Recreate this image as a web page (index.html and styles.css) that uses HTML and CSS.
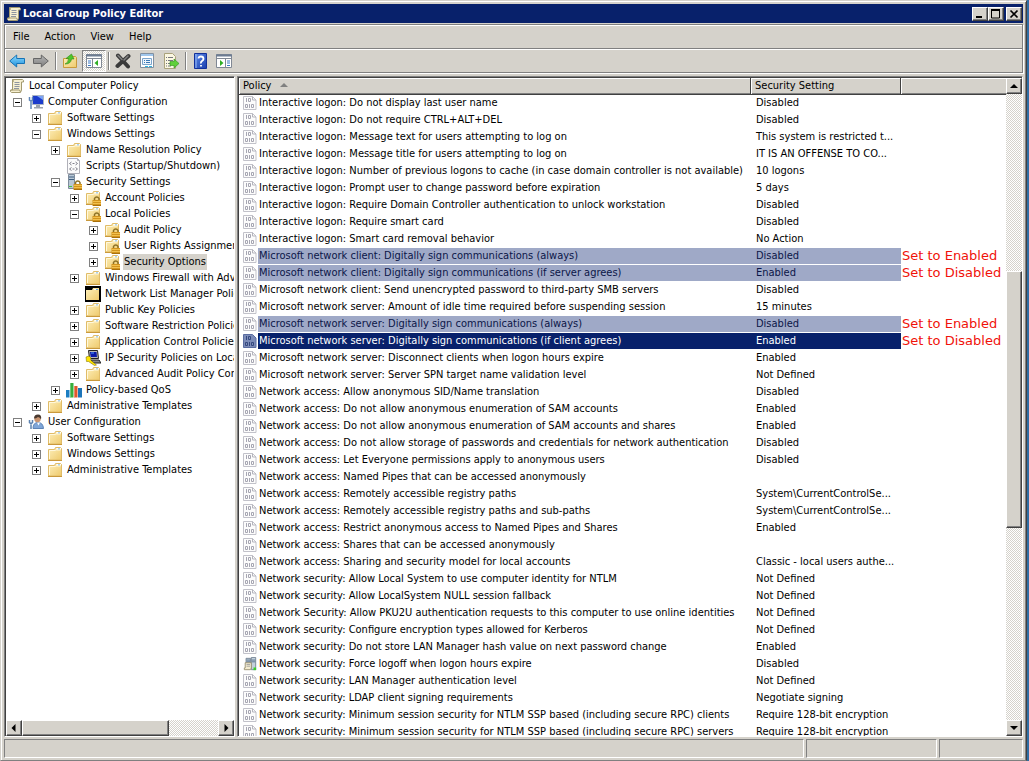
FILE: index.html
```html
<!DOCTYPE html>
<html lang="en">
<head>
  <meta charset="UTF-8">
  <meta name="viewport" content="width=device-width, initial-scale=1.0">
  <title>Local Group Policy Editor</title>
  <link rel="stylesheet" href="styles.css">
</head>
<body>

  <!-- Icon sprite -->
  <svg class="sprite" aria-hidden="true">
    <defs>
      <linearGradient id="gFolder" x1="0" y1="0" x2="1" y2="1">
        <stop offset="0" stop-color="#fdf0bc"/><stop offset="1" stop-color="#efca6c"/>
      </linearGradient>
      <linearGradient id="gBlue" x1="0" y1="0" x2="0" y2="1">
        <stop offset="0" stop-color="#8fdcff"/><stop offset="1" stop-color="#1d8fdc"/>
      </linearGradient>
      <linearGradient id="gGray" x1="0" y1="0" x2="0" y2="1">
        <stop offset="0" stop-color="#b8b8b8"/><stop offset="1" stop-color="#7c7c7c"/>
      </linearGradient>
      <linearGradient id="gHelp" x1="0" y1="0" x2="1" y2="1">
        <stop offset="0" stop-color="#5c8ae8"/><stop offset="1" stop-color="#1b3fae"/>
      </linearGradient>
    </defs>

    <symbol id="scroll" viewBox="0 0 16 16">
      <path d="M3.5 1.5h10q1.5.5 1 2.5h-2v8l-1 2.500h-9q-1.500-.500-1-2.500h2z" fill="#f6efd0" stroke="#a39a70"/>
      <path d="M3.500 1.500q1.500 1 .500 2.500M2 12h8.500l1 2" fill="none" stroke="#a39a70"/>
      <path d="M5.500 4.500h5M5.500 6.500h5M5.500 8.500h5M5 10.500h5" stroke="#8e95a0"/>
    </symbol>
    <symbol id="folder" viewBox="0 0 16 16">
      <path d="M1.500 3.500h6l1-2h5l1 1v11.500h-13z" fill="url(#gFolder)" stroke="#e0bc68"/>
      <path d="M9 3.500h5V2H9.500z" fill="#fff"/>
      <path d="M11 3h2" stroke="#5aa6e6"/>
      <path d="M2.500 13V4.500h6l1-.500h4" fill="none" stroke="#fff8dc"/>
      <path d="M1 14.500h14" stroke="#c9993c"/>
    </symbol>
    <symbol id="lock" viewBox="0 0 16 16">
      <path d="M9.500 10V8.500a2.500 2.500 0 0 1 4.500 0V10" fill="none" stroke="#8c7126" stroke-width="1.500"/>
      <path d="M7.500 10h8.500v6H7.500z" fill="#d2941e"/>
      <path d="M8 11.500h8M8 13.500h8" stroke="#f2c04c"/>
      <path d="M8 15.500h8" stroke="#a8700c"/>
    </symbol>
    <symbol id="folderLock" viewBox="0 0 16 16">
      <use href="#folder" width="16" height="16"/><use href="#lock" width="16" height="16"/>
    </symbol>
    <symbol id="folderDark" viewBox="0 0 16 16">
      <path d="M0 0h16v16H0z" fill="#000"/>
      <path d="M1 4h6l1-2h6v12H1z" fill="url(#gFolder)"/>
      <path d="M9 3.500h4" stroke="#fff"/><path d="M11 3.500h2" stroke="#5aa6e6"/>
    </symbol>
    <symbol id="computer" viewBox="0 0 16 16">
      <path d="M4.500 1.500h11v9h-11z" fill="#1c3ccc" stroke="#aab4c4"/>
      <path d="M9 2h6v4z" fill="#7aa2f4"/>
      <path d="M8 11h4v2h3v1.500H6V13h2z" fill="#9aa2ae"/>
      <path d="M1.500 3v3l1.500 1 1.500-1V3M3 7v8" fill="none" stroke="#5f86b8" stroke-width="1.500"/>
    </symbol>
    <symbol id="user" viewBox="0 0 16 16">
      <path d="M5 14.500q0-6 5-6t5.500 6z" fill="#7fa6d8" stroke="#5e84b6"/>
      <path d="M9 8.500l1.500 3 1.500-3z" fill="#fff"/>
      <circle cx="9.500" cy="5" r="3.200" fill="#c99470"/>
      <path d="M6 4.500q0-4 4-4t3 5q-1-2.500-3-2.500-2 1.500-4 1.500z" fill="#4a3a30"/>
      <path d="M1.500 6v2.500L3 9.500l1.500-1V6M3 9.500V15" fill="none" stroke="#5d82b0" stroke-width="1.500"/>
    </symbol>
    <symbol id="script" viewBox="0 0 16 16">
      <path d="M1.500.500h10l2 2v13h-12z" fill="#fbfbfb" stroke="#b0b0b8"/>
      <path d="M11.500.500v2h2" fill="none" stroke="#b0b0b8"/>
      <path d="M5.500 4L3.500 5.500l2 1.500M9.500 4l2 1.500-2 1.500M6.500 5.500h2M5.500 9.500l-2 1.500 2 1.500M9.500 9.500l2 1.500-2 1.500M6.500 11h2" fill="none" stroke="#80808c"/>
    </symbol>
    <symbol id="server" viewBox="0 0 16 16">
      <path d="M2.500.500h6v14h-6z" fill="#b9c8d6" stroke="#7e8c9c"/>
      <path d="M3 3h5M3 5.500h5" stroke="#3f5f80"/><path d="M3 12.500h3" stroke="#49c440"/>
      <use href="#lock" width="16" height="16"/>
    </symbol>
    <symbol id="ipsec" viewBox="0 0 16 16">
      <path d="M3.500.500h9l1 8h-9z" fill="#b8b8b8" stroke="#222"/>
      <path d="M5 2h6.500l.5 5H5.700z" fill="#0a1aa8"/><path d="M6 3h3" stroke="#4d9cff"/>
      <path d="M6 10h8l2 3H8z" fill="#888" stroke="#222"/>
      <path d="M1 7l3-1 2 2-.500 2 6 5-2 .500-6-4-2 0z" fill="#ffe400" stroke="#6e6200" stroke-width=".5"/>
    </symbol>
    <symbol id="bars" viewBox="0 0 16 16">
      <path d="M0 8h3.500v7.500H0z" fill="#1c7ec2"/><path d="M4 1h3.500v14.500H4z" fill="#37ae3c"/>
      <path d="M8 4h3.500v11.500H8z" fill="#e0582c"/><path d="M12 6h4v9.500h-4z" fill="#1c74b8"/>
      <path d="M4.500 1v14M8.500 4v11" stroke="#fff" stroke-opacity=".3"/>
    </symbol>
    <symbol id="binary" viewBox="0 0 14 14">
      <path d="M.500.500h9l3.500 3.500v9.500H.500z" fill="#fcfcfc" stroke="#c2c2ca"/>
      <path d="M9.500.500V4H13" fill="none" stroke="#b4b4bc"/>
      <path d="M3.500 2v4M5.500 2.500h2v3h-2zM2.500 8.500h2v3h-2zM6.500 8v4M8.500 8.500h2v3h-2z" fill="none" stroke="#a6a6b2"/>
    </symbol>
    <symbol id="binarySel" viewBox="0 0 14 14">
      <path d="M.500.500h9l3.500 3.500v9.500H.500z" fill="#7c8cb8" stroke="#5a6ca0"/>
      <path d="M3.500 2v4M5.500 2.500h2v3h-2zM2.500 8.500h2v3h-2zM6.500 8v4M8.500 8.500h2v3h-2z" fill="none" stroke="#35487e"/>
    </symbol>
    <symbol id="servers" viewBox="0 0 16 16">
      <path d="M3.500 1.500h5v12h-5zM9.500.500h5v14h-5z" fill="#c3d0dc" stroke="#6f7f90"/>
      <path d="M4 3.500h4M4 5.500h4M10 3.500h4M10 5.500h4" stroke="#4f6b88"/>
      <path d="M2.500 6.500h7v6l-1 2h-7v-2h1z" fill="#f4ecd0" stroke="#988f70"/>
      <path d="M4 8.500h4M4 10.500h4" stroke="#9c9c9c"/><path d="M12 12h3v3h-3z" fill="#37d028"/>
    </symbol>

    <symbol id="back" viewBox="0 0 16 16">
      <path d="M.700 8l7-6v3.500h7.800v5H7.700V14z" fill="url(#gBlue)" stroke="#1673b6"/>
    </symbol>
    <symbol id="forward" viewBox="0 0 16 16">
      <path d="M15.300 8l-7-6v3.500H.500v5h7.800V14z" fill="url(#gGray)" stroke="#666"/>
    </symbol>
    <symbol id="up" viewBox="0 0 16 16">
      <path d="M1.500 5.500h5l1-2h6l1 1v10h-13z" fill="url(#gFolder)" stroke="#c99a3c"/>
      <path d="M3 11q3.500-1 3.500-5.500H4L9.500 1l2.500 5H9.500Q9 11 3 11z" fill="#4fc62c" stroke="#2c8a17" stroke-width=".6"/>
    </symbol>
    <symbol id="treePane" viewBox="0 0 16 16">
      <path d="M.500 1.500h15v13H.500z" fill="#fff" stroke="#808894"/><path d="M0 2.500h16" stroke="#6d7c92" stroke-width="2"/>
      <path d="M0 5.500h16M6.500 6v9" stroke="#808894"/><path d="M2 8h3M2 10h3M2 12.500h3" stroke="#3b78c4"/>
      <path d="M12 7v6l-3.500-3z" fill="#2fae24"/>
    </symbol>
    <symbol id="delete" viewBox="0 0 16 16">
      <path d="M3 2.500l10 11M13.500 3L2.500 13" stroke="#3a3a3a" stroke-width="4" stroke-linecap="round"/>
      <path d="M3 2.500l4 4M13 3L9 7" stroke="#808080" stroke-width="1.500" stroke-linecap="round"/>
    </symbol>
    <symbol id="props" viewBox="0 0 16 16">
      <path d="M1.500.500h13v14h-13z" fill="#fff" stroke="#8290a0"/><path d="M2 2h12" stroke="#9fc6ec" stroke-width="2"/>
      <path d="M3.500 5.500h9v6h-9z" fill="#eef5fc" stroke="#7aa4cc"/>
      <path d="M5 7.500h1M7 7.500h4M5 9.500h1M7 9.500h4" stroke="#3978b8"/><path d="M6 13.500h3M10 13.500h3" stroke="#30b4e0"/>
    </symbol>
    <symbol id="export" viewBox="0 0 16 16">
      <path d="M1.500.500h8l3 3v12h-11z" fill="#fbf7e2" stroke="#aaa27c"/>
      <path d="M3 4.500h1M5 4.500h5M3 7.500h1M5 7.500h5M3 10.500h1M5 10.500h3M3 13h1M5 13h3" stroke="#77777f"/>
      <path d="M7 8.500h4V6l5 4.500-5 4.500v-2.500H7z" fill="#5fd03a" stroke="#2e9018" stroke-width=".6"/>
    </symbol>
    <symbol id="help" viewBox="0 0 16 16">
      <path d="M2.500.500h12v15h-12z" fill="url(#gHelp)" stroke="#12309a"/>
      <path d="M4 1v14" stroke="#9bbcf6"/>
      <path d="M6.500 5.500Q6.500 3.500 9 3.500T11.500 6Q11.500 7 10 8T9 10.500M9 12v1.500" fill="none" stroke="#fff" stroke-width="1.800"/>
    </symbol>
    <symbol id="actionPane" viewBox="0 0 16 16">
      <path d="M.500 1.500h15v13H.500z" fill="#fff" stroke="#808894"/><path d="M0 2.500h16" stroke="#6d7c92" stroke-width="2"/>
      <path d="M0 5.500h16M9.500 6v9" stroke="#808894"/><path d="M11 8h3M11 10h3M11 12.500h3" stroke="#3b78c4"/>
      <path d="M4 7v6l3.500-3z" fill="#2fae24"/>
    </symbol>
  </svg>

  <div class="window">
    <!-- Title bar -->
    <header class="titlebar">
      <svg class="icon"><use href="#scroll"/></svg>
      <h1 class="title">Local Group Policy Editor</h1>
      <button class="caption-btn" aria-label="Minimize"><svg viewBox="0 0 12 10"><path d="M2 8h6" stroke="#000" stroke-width="2"/></svg></button>
      <button class="caption-btn" aria-label="Maximize"><svg viewBox="0 0 12 10"><path d="M1.500 1v8h8V1" fill="none" stroke="#000"/><path d="M1 1h9" stroke="#000" stroke-width="2"/></svg></button>
      <button class="caption-btn close" aria-label="Close"><svg viewBox="0 0 12 10"><path d="M2.500 1.500l7 7M9.500 1.500l-7 7" stroke="#000" stroke-width="1.700"/></svg></button>
    </header>

    <!-- Menu and toolbar -->
    <div class="bars">
      <nav class="menubar">
        <button>File</button>
        <button>Action</button>
        <button>View</button>
        <button>Help</button>
      </nav>
      <div class="toolbar">
        <button class="tool" aria-label="Back"><svg class="icon"><use href="#back"/></svg></button>
        <button class="tool" aria-label="Forward"><svg class="icon"><use href="#forward"/></svg></button>
        <span class="sep"></span>
        <button class="tool" aria-label="Up one level"><svg class="icon"><use href="#up"/></svg></button>
        <button class="tool pressed" aria-label="Show or hide console tree"><svg class="icon"><use href="#treePane"/></svg></button>
        <span class="sep"></span>
        <button class="tool" aria-label="Delete"><svg class="icon"><use href="#delete"/></svg></button>
        <button class="tool" aria-label="Properties"><svg class="icon"><use href="#props"/></svg></button>
        <button class="tool" aria-label="Export list"><svg class="icon"><use href="#export"/></svg></button>
        <span class="sep"></span>
        <button class="tool" aria-label="Help topics"><svg class="icon"><use href="#help"/></svg></button>
        <button class="tool" aria-label="Show or hide action pane"><svg class="icon"><use href="#actionPane"/></svg></button>
      </div>
    </div>

    <main class="content">
      <!-- Console tree -->
      <section class="panel tree-panel">
        <div class="tree">
          <div class="node root"><svg class="icon"><use href="#scroll"/></svg><span>Local Computer Policy</span></div>
          <ul>
            <li><div class="node"><button class="exp open" aria-label="Collapse"></button><svg class="icon"><use href="#computer"/></svg><span>Computer Configuration</span></div>
              <ul>
                <li><div class="node"><button class="exp" aria-label="Expand"></button><svg class="icon"><use href="#folder"/></svg><span>Software Settings</span></div></li>
                <li><div class="node"><button class="exp open" aria-label="Collapse"></button><svg class="icon"><use href="#folder"/></svg><span>Windows Settings</span></div>
                  <ul>
                    <li><div class="node"><button class="exp" aria-label="Expand"></button><svg class="icon"><use href="#folder"/></svg><span>Name Resolution Policy</span></div></li>
                    <li><div class="node leaf"><svg class="icon"><use href="#script"/></svg><span>Scripts (Startup/Shutdown)</span></div></li>
                    <li><div class="node"><button class="exp open" aria-label="Collapse"></button><svg class="icon"><use href="#server"/></svg><span>Security Settings</span></div>
                      <ul>
                        <li><div class="node"><button class="exp" aria-label="Expand"></button><svg class="icon"><use href="#folderLock"/></svg><span>Account Policies</span></div></li>
                        <li><div class="node"><button class="exp open" aria-label="Collapse"></button><svg class="icon"><use href="#folderLock"/></svg><span>Local Policies</span></div>
                          <ul>
                            <li><div class="node"><button class="exp" aria-label="Expand"></button><svg class="icon"><use href="#folderLock"/></svg><span>Audit Policy</span></div></li>
                            <li><div class="node"><button class="exp" aria-label="Expand"></button><svg class="icon"><use href="#folderLock"/></svg><span>User Rights Assignment</span></div></li>
                            <li><div class="node current"><button class="exp" aria-label="Expand"></button><svg class="icon"><use href="#folderLock"/></svg><span>Security Options</span></div></li>
                          </ul>
                        </li>
                        <li><div class="node"><button class="exp" aria-label="Expand"></button><svg class="icon"><use href="#folder"/></svg><span>Windows Firewall with Advanced Security</span></div></li>
                        <li><div class="node leaf"><svg class="icon"><use href="#folderDark"/></svg><span>Network List Manager Policies</span></div></li>
                        <li><div class="node"><button class="exp" aria-label="Expand"></button><svg class="icon"><use href="#folder"/></svg><span>Public Key Policies</span></div></li>
                        <li><div class="node"><button class="exp" aria-label="Expand"></button><svg class="icon"><use href="#folder"/></svg><span>Software Restriction Policies</span></div></li>
                        <li><div class="node"><button class="exp" aria-label="Expand"></button><svg class="icon"><use href="#folder"/></svg><span>Application Control Policies</span></div></li>
                        <li><div class="node"><button class="exp" aria-label="Expand"></button><svg class="icon"><use href="#ipsec"/></svg><span>IP Security Policies on Local Computer</span></div></li>
                        <li><div class="node"><button class="exp" aria-label="Expand"></button><svg class="icon"><use href="#folder"/></svg><span>Advanced Audit Policy Configuration</span></div></li>
                      </ul>
                    </li>
                    <li><div class="node"><button class="exp" aria-label="Expand"></button><svg class="icon"><use href="#bars"/></svg><span>Policy-based QoS</span></div></li>
                  </ul>
                </li>
                <li><div class="node"><button class="exp" aria-label="Expand"></button><svg class="icon"><use href="#folder"/></svg><span>Administrative Templates</span></div></li>
              </ul>
            </li>
            <li><div class="node"><button class="exp open" aria-label="Collapse"></button><svg class="icon"><use href="#user"/></svg><span>User Configuration</span></div>
              <ul>
                <li><div class="node"><button class="exp" aria-label="Expand"></button><svg class="icon"><use href="#folder"/></svg><span>Software Settings</span></div></li>
                <li><div class="node"><button class="exp" aria-label="Expand"></button><svg class="icon"><use href="#folder"/></svg><span>Windows Settings</span></div></li>
                <li><div class="node"><button class="exp" aria-label="Expand"></button><svg class="icon"><use href="#folder"/></svg><span>Administrative Templates</span></div></li>
              </ul>
            </li>
          </ul>
        </div>
        <div class="scrollbar horizontal">
          <button class="arrow" aria-label="Scroll left"><svg viewBox="0 0 8 8"><path d="M5.500 0v8l-4-4z"/></svg></button>
          <div class="thumb"></div>
          <div class="track"></div>
          <button class="arrow" aria-label="Scroll right"><svg viewBox="0 0 8 8"><path d="M2.500 0v8l4-4z"/></svg></button>
        </div>
      </section>

      <!-- Policy list -->
      <section class="panel list-panel">
        <div class="list">
          <table>
            <colgroup><col class="col-policy"><col class="col-setting"><col></colgroup>
            <thead>
              <tr><th>Policy <svg class="sort" viewBox="0 0 8 4"><path d="M0 4l4-4 4 4z"/></svg></th><th>Security Setting</th><th></th></tr>
            </thead>
            <tbody>
              <tr><td><div class="policy"><svg><use href="#binary"/></svg><span>Interactive logon: Do not display last user name</span></div></td><td>Disabled</td><td></td></tr>
              <tr><td><div class="policy"><svg><use href="#binary"/></svg><span>Interactive logon: Do not require CTRL+ALT+DEL</span></div></td><td>Disabled</td><td></td></tr>
              <tr><td><div class="policy"><svg><use href="#binary"/></svg><span>Interactive logon: Message text for users attempting to log on</span></div></td><td>This system is restricted t...</td><td></td></tr>
              <tr><td><div class="policy"><svg><use href="#binary"/></svg><span>Interactive logon: Message title for users attempting to log on</span></div></td><td>IT IS AN OFFENSE TO CO...</td><td></td></tr>
              <tr><td><div class="policy"><svg><use href="#binary"/></svg><span>Interactive logon: Number of previous logons to cache (in case domain controller is not available)</span></div></td><td>10 logons</td><td></td></tr>
              <tr><td><div class="policy"><svg><use href="#binary"/></svg><span>Interactive logon: Prompt user to change password before expiration</span></div></td><td>5 days</td><td></td></tr>
              <tr><td><div class="policy"><svg><use href="#binary"/></svg><span>Interactive logon: Require Domain Controller authentication to unlock workstation</span></div></td><td>Disabled</td><td></td></tr>
              <tr><td><div class="policy"><svg><use href="#binary"/></svg><span>Interactive logon: Require smart card</span></div></td><td>Disabled</td><td></td></tr>
              <tr><td><div class="policy"><svg><use href="#binary"/></svg><span>Interactive logon: Smart card removal behavior</span></div></td><td>No Action</td><td></td></tr>
              <tr class="marked"><td><div class="policy"><svg><use href="#binary"/></svg><span>Microsoft network client: Digitally sign communications (always)</span></div></td><td>Disabled</td><td class="note">Set to Enabled</td></tr>
              <tr class="marked"><td><div class="policy"><svg><use href="#binary"/></svg><span>Microsoft network client: Digitally sign communications (if server agrees)</span></div></td><td>Enabled</td><td class="note">Set to Disabled</td></tr>
              <tr><td><div class="policy"><svg><use href="#binary"/></svg><span>Microsoft network client: Send unencrypted password to third-party SMB servers</span></div></td><td>Disabled</td><td></td></tr>
              <tr><td><div class="policy"><svg><use href="#binary"/></svg><span>Microsoft network server: Amount of idle time required before suspending session</span></div></td><td>15 minutes</td><td></td></tr>
              <tr class="marked"><td><div class="policy"><svg><use href="#binary"/></svg><span>Microsoft network server: Digitally sign communications (always)</span></div></td><td>Disabled</td><td class="note">Set to Enabled</td></tr>
              <tr class="selected"><td><div class="policy"><svg><use href="#binarySel"/></svg><span>Microsoft network server: Digitally sign communications (if client agrees)</span></div></td><td>Enabled</td><td class="note">Set to Disabled</td></tr>
              <tr><td><div class="policy"><svg><use href="#binary"/></svg><span>Microsoft network server: Disconnect clients when logon hours expire</span></div></td><td>Enabled</td><td></td></tr>
              <tr><td><div class="policy"><svg><use href="#binary"/></svg><span>Microsoft network server: Server SPN target name validation level</span></div></td><td>Not Defined</td><td></td></tr>
              <tr><td><div class="policy"><svg><use href="#binary"/></svg><span>Network access: Allow anonymous SID/Name translation</span></div></td><td>Disabled</td><td></td></tr>
              <tr><td><div class="policy"><svg><use href="#binary"/></svg><span>Network access: Do not allow anonymous enumeration of SAM accounts</span></div></td><td>Enabled</td><td></td></tr>
              <tr><td><div class="policy"><svg><use href="#binary"/></svg><span>Network access: Do not allow anonymous enumeration of SAM accounts and shares</span></div></td><td>Enabled</td><td></td></tr>
              <tr><td><div class="policy"><svg><use href="#binary"/></svg><span>Network access: Do not allow storage of passwords and credentials for network authentication</span></div></td><td>Disabled</td><td></td></tr>
              <tr><td><div class="policy"><svg><use href="#binary"/></svg><span>Network access: Let Everyone permissions apply to anonymous users</span></div></td><td>Disabled</td><td></td></tr>
              <tr><td><div class="policy"><svg><use href="#binary"/></svg><span>Network access: Named Pipes that can be accessed anonymously</span></div></td><td></td><td></td></tr>
              <tr><td><div class="policy"><svg><use href="#binary"/></svg><span>Network access: Remotely accessible registry paths</span></div></td><td>System\CurrentControlSe...</td><td></td></tr>
              <tr><td><div class="policy"><svg><use href="#binary"/></svg><span>Network access: Remotely accessible registry paths and sub-paths</span></div></td><td>System\CurrentControlSe...</td><td></td></tr>
              <tr><td><div class="policy"><svg><use href="#binary"/></svg><span>Network access: Restrict anonymous access to Named Pipes and Shares</span></div></td><td>Enabled</td><td></td></tr>
              <tr><td><div class="policy"><svg><use href="#binary"/></svg><span>Network access: Shares that can be accessed anonymously</span></div></td><td></td><td></td></tr>
              <tr><td><div class="policy"><svg><use href="#binary"/></svg><span>Network access: Sharing and security model for local accounts</span></div></td><td>Classic - local users authe...</td><td></td></tr>
              <tr><td><div class="policy"><svg><use href="#binary"/></svg><span>Network security: Allow Local System to use computer identity for NTLM</span></div></td><td>Not Defined</td><td></td></tr>
              <tr><td><div class="policy"><svg><use href="#binary"/></svg><span>Network security: Allow LocalSystem NULL session fallback</span></div></td><td>Not Defined</td><td></td></tr>
              <tr><td><div class="policy"><svg><use href="#binary"/></svg><span>Network Security: Allow PKU2U authentication requests to this computer to use online identities</span></div></td><td>Not Defined</td><td></td></tr>
              <tr><td><div class="policy"><svg><use href="#binary"/></svg><span>Network security: Configure encryption types allowed for Kerberos</span></div></td><td>Not Defined</td><td></td></tr>
              <tr><td><div class="policy"><svg><use href="#binary"/></svg><span>Network security: Do not store LAN Manager hash value on next password change</span></div></td><td>Enabled</td><td></td></tr>
              <tr><td><div class="policy"><svg><use href="#servers"/></svg><span>Network security: Force logoff when logon hours expire</span></div></td><td>Disabled</td><td></td></tr>
              <tr><td><div class="policy"><svg><use href="#binary"/></svg><span>Network security: LAN Manager authentication level</span></div></td><td>Not Defined</td><td></td></tr>
              <tr><td><div class="policy"><svg><use href="#binary"/></svg><span>Network security: LDAP client signing requirements</span></div></td><td>Negotiate signing</td><td></td></tr>
              <tr><td><div class="policy"><svg><use href="#binary"/></svg><span>Network security: Minimum session security for NTLM SSP based (including secure RPC) clients</span></div></td><td>Require 128-bit encryption</td><td></td></tr>
              <tr><td><div class="policy"><svg><use href="#binary"/></svg><span>Network security: Minimum session security for NTLM SSP based (including secure RPC) servers</span></div></td><td>Require 128-bit encryption</td><td></td></tr>
            </tbody>
          </table>
        </div>
        <div class="scrollbar vertical">
          <button class="arrow" aria-label="Scroll up"><svg viewBox="0 0 8 8"><path d="M0 6h8L4 2z"/></svg></button>
          <div class="track before"></div>
          <div class="thumb"></div>
          <div class="track after"></div>
          <button class="arrow" aria-label="Scroll down"><svg viewBox="0 0 8 8"><path d="M0 2h8L4 6z"/></svg></button>
        </div>
      </section>
    </main>

    <!-- Status bar -->
    <footer class="statusbar">
      <div class="cell main"></div>
      <div class="cell middle"></div>
      <div class="cell last"></div>
    </footer>
  </div>

</body>
</html>
```
FILE: styles.css
```css
:root {
  --face: #d5d2cb;
  --navy: #08216b;
  --marked: #9fa9c7;
  --light: #ffffff;
  --shadow: #808080;
  --dark: #404040;
  --desktop: #2f6da4;
}

* {
  margin: 0;
  padding: 0;
  box-sizing: border-box;
}

body {
  background: var(--desktop);
  color: #000;
  font: 11px/16px "DejaVu Sans Condensed", Tahoma, sans-serif;
  overflow: hidden;
}

button {
  border: none;
  background: none;
  color: inherit;
  font: inherit;
}

svg {
  display: block;
  flex: none;
}

.sprite {
  position: absolute;
  width: 0;
  height: 0;
}

.icon {
  width: 16px;
  height: 16px;
}

/* Window frame */
.window {
  display: flex;
  flex-direction: column;
  height: 100vh;
  margin-right: 2px;
  padding: 2px 3px 1px 2px;
  background: var(--face);
  border: 1px solid var(--face);
  border-right-color: var(--dark);
  border-bottom-color: var(--shadow);
  box-shadow: inset 1px 1px var(--light), inset -1px 0 var(--shadow);
}

/* Title bar */
.titlebar {
  display: flex;
  align-items: center;
  height: 19px;
  margin: 1px 0 0 1px;
  padding: 0 1px 0 2px;
  background: var(--navy);
  color: #fff;
}

.title {
  flex: 1;
  padding-left: 1px;
  font-size: 11px;
  font-weight: bold;
}

.caption-btn {
  display: flex;
  align-items: center;
  justify-content: center;
  width: 16px;
  height: 14px;
}

.caption-btn,
.arrow,
.thumb {
  background: var(--face);
  border: 1px solid;
  border-color: var(--light) var(--dark) var(--dark) var(--light);
  box-shadow: inset -1px -1px var(--shadow);
}

.caption-btn svg {
  width: 12px;
  height: 10px;
}

.caption-btn.close {
  margin-left: 2px;
}

/* Menu and toolbar */
.bars {
  margin: 1px 0 3px 1px;
  border: 1px solid var(--shadow);
  box-shadow: inset 1px 1px var(--light), 1px 1px var(--light);
}

.menubar {
  display: flex;
  gap: 15px;
  height: 24px;
  padding-left: 8px;
  border-bottom: 1px solid var(--shadow);
}

.toolbar {
  display: flex;
  align-items: center;
  height: 23px;
  border-top: 1px solid var(--light);
}

.tool {
  display: flex;
  align-items: center;
  justify-content: center;
  width: 24px;
  height: 22px;
}

.tool.pressed {
  border: 1px solid;
  border-color: var(--shadow) var(--light) var(--light) var(--shadow);
  background: repeating-conic-gradient(#fff 0 25%, var(--face) 0 50%) 0 0 / 2px 2px;
}

.sep {
  width: 2px;
  height: 18px;
  margin: 0 1px 0 2px;
  border-left: 1px solid var(--shadow);
  border-right: 1px solid var(--light);
}

/* Panels */
.content {
  display: flex;
  gap: 2px;
  flex: 1;
  min-height: 0;
  margin-left: 1px;
}

.panel {
  display: flex;
  min-height: 0;
  padding: 1px 0 0 1px;
  background: #fff;
  border: 1px solid;
  border-color: var(--shadow) var(--light) var(--light) var(--shadow);
  box-shadow: inset 1px 1px var(--dark);
}

/* Console tree */
.tree-panel {
  flex-direction: column;
  flex: none;
  width: 231px;
}

.tree {
  flex: 1;
  min-height: 0;
  overflow: hidden;
}

.tree ul {
  list-style: none;
  padding-left: 19px;
}

.tree > ul {
  padding-left: 7px;
}

.node {
  display: flex;
  align-items: center;
  height: 16px;
  white-space: nowrap;
}

.node span {
  margin-left: 3px;
  padding: 0 1px;
}

.node.root {
  padding-left: 3px;
}

.node.leaf {
  padding-left: 15px;
}

.node.current span {
  background: var(--face);
}

.exp {
  flex: none;
  width: 9px;
  height: 9px;
  margin-right: 6px;
  border: 1px solid var(--shadow);
  background:
    linear-gradient(#000, #000) center / 5px 1px no-repeat,
    linear-gradient(#000, #000) center / 1px 5px no-repeat;
}

.exp.open {
  background: linear-gradient(#000, #000) center / 5px 1px no-repeat;
}

/* Policy list */
.list-panel {
  flex: 1;
  min-width: 0;
}

.list {
  flex: 1;
  min-width: 0;
  overflow: hidden;
}

table {
  width: 100%;
  table-layout: fixed;
  border-collapse: separate;
  border-spacing: 0;
}

.col-policy {
  width: 512px;
}

.col-setting {
  width: 150px;
}

th {
  height: 17px;
  padding: 0 4px;
  background: var(--face);
  border-right: 1px solid var(--dark);
  border-bottom: 1px solid var(--dark);
  box-shadow: inset 1px 1px var(--light), inset 0 -1px var(--shadow);
  font-weight: normal;
  line-height: 16px;
  text-align: left;
}

th:last-child {
  border-right: none;
}

.sort {
  display: inline-block;
  width: 8px;
  height: 4px;
  margin: 0 0 2px 5px;
  fill: var(--shadow);
}

td {
  height: 17px;
  padding: 0 0 0 5px;
  border-bottom: 1px solid #fff;
  line-height: 16px;
  white-space: nowrap;
}

td:first-child {
  padding-left: 4px;
}

.policy {
  display: flex;
  align-items: center;
  height: 16px;
}

.policy svg {
  width: 14px;
  height: 14px;
}

.policy span {
  flex: 1;
  margin-left: 1px;
  padding-left: 1px;
}

.marked span,
.marked td:nth-child(2) {
  background: var(--marked);
  background-clip: padding-box;
  color: #0b1648;
}

.selected span,
.selected td:nth-child(2) {
  background: var(--navy);
  background-clip: padding-box;
  color: #fff;
}

td.note {
  padding-left: 1px;
  color: #f0120a;
  font: 13px/16px "DejaVu Sans", Verdana, sans-serif;
}

/* Scrollbars */
.scrollbar {
  display: flex;
  flex: none;
}

.scrollbar.vertical {
  flex-direction: column;
  width: 16px;
}

.scrollbar.horizontal {
  height: 16px;
}

.arrow {
  display: flex;
  align-items: center;
  justify-content: center;
  flex: none;
  width: 16px;
  height: 16px;
}

.arrow svg {
  width: 8px;
  height: 8px;
}

.track {
  flex: 49;
  background: repeating-conic-gradient(#fff 0 25%, var(--face) 0 50%) 0 0 / 2px 2px;
}

.thumb {
  flex: 146;
}

.vertical .before {
  flex: 178;
}

.vertical .thumb {
  flex: 255;
}

.vertical .after {
  flex: 193;
}

/* Status bar */
.statusbar {
  display: flex;
  gap: 2px;
  height: 19px;
  margin: 2px 0 1px 1px;
}

.cell {
  border: 1px solid;
  border-color: var(--shadow) var(--light) var(--light) var(--shadow);
}

.cell.main {
  flex: 1;
}

.cell.middle {
  width: 131px;
}

.cell.last {
  width: 84px;
}
```
